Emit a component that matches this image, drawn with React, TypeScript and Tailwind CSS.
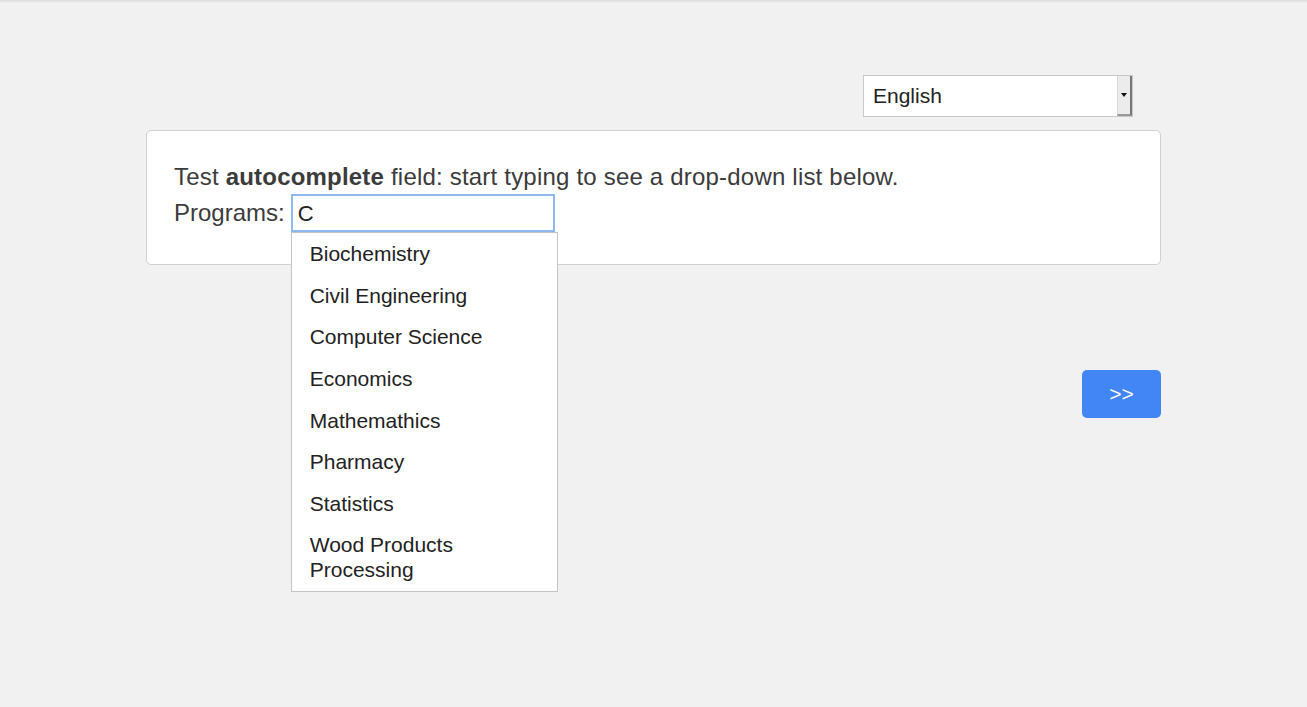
import React from "react";

const programs = [
  "Biochemistry",
  "Civil Engineering",
  "Computer Science",
  "Economics",
  "Mathemathics",
  "Pharmacy",
  "Statistics",
  "Wood Products Processing",
];

export default function App() {
  return (
    <div
      className="min-h-screen bg-[#f1f1f1] text-[#3b3b3b]"
      style={{ fontFamily: '"Liberation Sans", Arial, sans-serif' }}
    >
      <div className="h-[3px] bg-gradient-to-b from-[#dcdcdc] to-[#f1f1f1]" />
      <div className="w-[1015px] mx-auto">
        <div className="flex justify-end pr-[28px] pt-[72px]">
          <div className="w-[270px] h-[42px] bg-white border border-[#c8c8c8] flex items-stretch">
            <div className="flex-1 flex items-center pl-[9px] text-[21px] text-[#222]">English</div>
            <div className="w-[15px] bg-[#ececec] border-l border-[#d8d8d8] border-r-2 border-r-[#777] border-b-2 border-b-[#999] flex items-center justify-center">
              <svg width="6" height="4" viewBox="0 0 6 4">
                <path d="M0 0 L6 0 L3 4 Z" fill="#111" />
              </svg>
            </div>
          </div>
        </div>

        <div className="mt-[13px] h-[135px] bg-white border border-[#d0d0d0] rounded-[5px] px-[27px] pt-[32px] text-[24px]">
          <div className="leading-[28px] tracking-[0.2px]">
            Test <b className="font-bold">autocomplete</b> field: start typing to see a drop-down list below.
          </div>
          <div className="mt-[3px] flex items-center">
            <span className="mr-[6px]">Programs:</span>
            <div className="relative">
              <div className="w-[264px] h-[38px] border-2 border-[#8db8f2] flex items-center pl-[5px] text-[22px] text-[#222] bg-white">
                C
              </div>
              <div className="absolute left-0 top-[38px] w-[267px] bg-white border border-[#c4c4c4] z-10 text-[#222] text-[21px]">
                {programs.map((p) => (
                  <div key={p} className="px-[18px] py-[8.3px] leading-[25px]">
                    {p}
                  </div>
                ))}
              </div>
            </div>
          </div>
        </div>

        <div className="flex justify-end mt-[105px]">
          <button className="w-[79px] h-[48px] rounded-[5px] bg-[#4285f4] text-white text-[21px] flex items-center justify-center">
            &gt;&gt;
          </button>
        </div>
      </div>
    </div>
  );
}
